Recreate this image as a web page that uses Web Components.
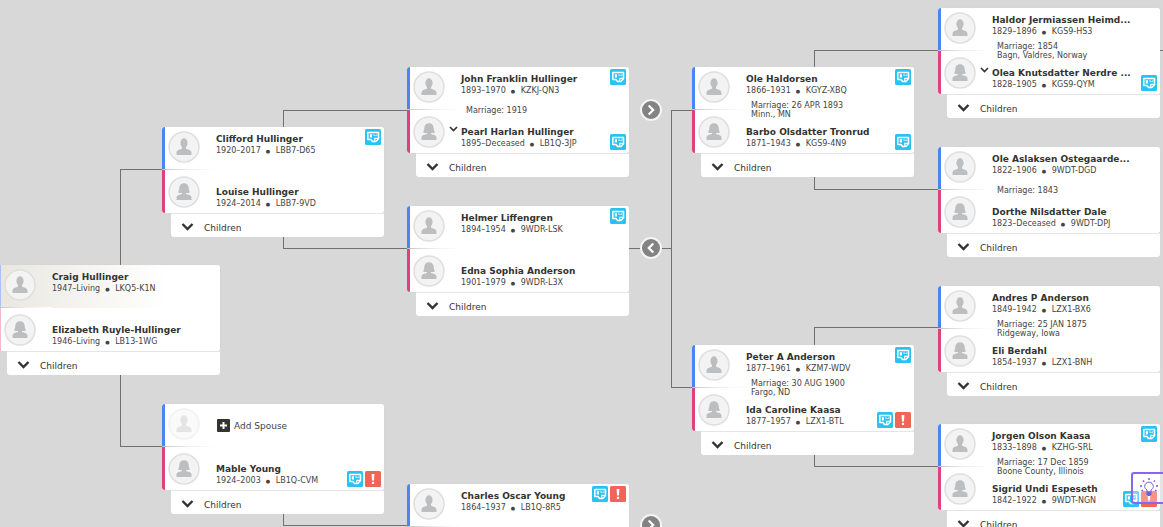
<!DOCTYPE html>
<html lang="en">
<head>
<meta charset="utf-8">
<title>Family tree</title>
<style>
  html, body { margin: 0; height: 100%; }
  body { background: #d8d8d8; font-family: "DejaVu Sans", Verdana, sans-serif; color: #333331; overflow: hidden; }
</style>
</head>
<body>
<pedigree-canvas>
  <couple-card focus style="--x:-2px;--y:265px">
    <tree-person name="Craig Hullinger" life="1947–Living" pid="LKQ5-K1N"></tree-person>
    <tree-person slot="second" sex="f" name="Elizabeth Ruyle-Hullinger" life="1946–Living" pid="LB13-1WG"></tree-person>
  </couple-card>
  <couple-card style="--x:162px;--y:127px">
    <tree-person name="Clifford Hullinger" life="1920–2017" pid="LBB7-D65" hints="r"></tree-person>
    <tree-person slot="second" sex="f" name="Louise Hullinger" life="1924–2014" pid="LBB7-9VD"></tree-person>
  </couple-card>
  <couple-card style="--x:162px;--y:404px">
    <tree-person empty></tree-person>
    <tree-person slot="second" sex="f" name="Mable Young" life="1924–2003" pid="LB1Q-CVM" hints="rp"></tree-person>
  </couple-card>
  <couple-card marriage="Marriage: 1919" style="--x:407px;--y:67px">
    <tree-person name="John Franklin Hullinger" life="1893–1970" pid="KZKJ-QN3" hints="r"></tree-person>
    <tree-person slot="second" sex="f" more name="Pearl Harlan Hullinger" life="1895–Deceased" pid="LB1Q-3JP" hints="r"></tree-person>
  </couple-card>
  <couple-card style="--x:407px;--y:206px">
    <tree-person name="Helmer Liffengren" life="1894–1954" pid="9WDR-LSK" hints="r"></tree-person>
    <tree-person slot="second" sex="f" name="Edna Sophia Anderson" life="1901–1979" pid="9WDR-L3X"></tree-person>
  </couple-card>
  <couple-card collapsed style="--x:407px;--y:484px">
    <tree-person name="Charles Oscar Young" life="1864–1937" pid="LB1Q-8R5" hints="rp"></tree-person>
  </couple-card>
  <couple-card marriage="Marriage: 26 APR 1893|Minn., MN" style="--x:692px;--y:67px">
    <tree-person name="Ole Haldorsen" life="1866–1931" pid="KGYZ-XBQ" hints="r"></tree-person>
    <tree-person slot="second" sex="f" name="Barbo Olsdatter Tronrud" life="1871–1943" pid="KGS9-4N9" hints="r"></tree-person>
  </couple-card>
  <couple-card marriage="Marriage: 30 AUG 1900|Fargo, ND" style="--x:692px;--y:345px">
    <tree-person name="Peter A Anderson" life="1877–1961" pid="KZM7-WDV" hints="r"></tree-person>
    <tree-person slot="second" sex="f" name="Ida Caroline Kaasa" life="1877–1957" pid="LZX1-BTL" hints="rp"></tree-person>
  </couple-card>
  <couple-card marriage="Marriage: 1854|Bagn, Valdres, Norway" style="--x:938px;--y:8px">
    <tree-person name="Haldor Jermiassen Heimd..." life="1829–1896" pid="KGS9-HS3"></tree-person>
    <tree-person slot="second" sex="f" more name="Olea Knutsdatter Nerdre ..." life="1828–1905" pid="KGS9-QYM" hints="r"></tree-person>
  </couple-card>
  <couple-card marriage="Marriage: 1843" style="--x:938px;--y:147px">
    <tree-person name="Ole Aslaksen Ostegaarde..." life="1822–1906" pid="9WDT-DGD"></tree-person>
    <tree-person slot="second" sex="f" name="Dorthe Nilsdatter Dale" life="1823–Deceased" pid="9WDT-DPJ"></tree-person>
  </couple-card>
  <couple-card marriage="Marriage: 25 JAN 1875|Ridgeway, Iowa" style="--x:938px;--y:286px">
    <tree-person name="Andres P Anderson" life="1849–1942" pid="LZX1-BX6"></tree-person>
    <tree-person slot="second" sex="f" name="Eli Berdahl" life="1854–1937" pid="LZX1-BNH"></tree-person>
  </couple-card>
  <couple-card marriage="Marriage: 17 Dec 1859|Boone County, Illinois" style="--x:938px;--y:424px">
    <tree-person name="Jorgen Olson Kaasa" life="1833–1898" pid="KZHG-SRL" hints="r"></tree-person>
    <tree-person slot="second" sex="f" name="Sigrid Undi Espeseth" life="1842–1922" pid="9WDT-NGN" hints="rp"></tree-person>
  </couple-card>
  <page-arrow style="--x:640px;--y:99px"></page-arrow>
  <page-arrow back style="--x:640px;--y:237px"></page-arrow>
  <page-arrow style="--x:640px;--y:514px"></page-arrow>
  <tip-button></tip-button>
</pedigree-canvas>
<script>
const define = (tag, html, setup) => {
  const tpl = document.createElement('template');
  tpl.innerHTML = html;
  customElements.define(tag, class extends HTMLElement {
    constructor() {
      super();
      this.attachShadow({ mode: 'open' }).append(tpl.content.cloneNode(true));
    }
    connectedCallback() { if (setup) setup(this, this.shadowRoot); }
  });
};

define('pedigree-canvas', `
  <style>
    :host { display: block; position: relative; width: 100%; height: 100%; overflow: hidden; }
    svg { position: absolute; inset: 0; width: 100%; height: 100%; }
  </style>
  <svg aria-hidden="true" fill="none" stroke="#707070" shape-rendering="crispEdges">
    <path d="M162 169.500H120.500V446.500H162M407 110.500H283.500V248.500H407M283.500 500V525.500H407M692 110.500H671.500V387.500H692M629 248.500H671M938 50.500H814.500V189.500H938M938 327.500H814.500V466.500H938M1160 50.500H1400"/>
  </svg>
  <slot></slot>`);

/* A couple: two people, their marriage and the children toggle */
define('couple-card', `
  <style>
    :host { position: absolute; left: var(--x); top: var(--y); width: 222px; }
    .couple { position: relative; display: grid; grid-template-rows: 43px 43px; background: #fff; border-radius: 3px; overflow: hidden; box-shadow: 0 0 1px #ccc; }
    .rule { position: absolute; left: 0; top: 42px; width: 54px; height: 1px; background: linear-gradient(90deg, #c4c4c4, #eee 50%, #fff); }
    .marriage { position: absolute; left: 59px; top: 43px; transform: translateY(-50%); margin: 0; font-size: 8px; line-height: 9px; color: #444; white-space: pre-line; }
    .marriage:empty, :host([collapsed]) button { display: none; }
    :host([focus]) .couple { --top-bg: linear-gradient(90deg, #e9e7df, #f4f3ef 35%, #fff 75%); --m: #a5c4f5; --f: #f5b5cc; }
    button { display: flex; align-items: center; gap: 10px; box-sizing: border-box; width: 213px; height: 24px; margin: 0 0 0 9px; padding: 4px 0 0 10px; border: 0; border-top: 1px solid #e8e8e8; border-radius: 0 0 3px 3px; background: #fff; color: #333331; font: 9px/12px "DejaVu Sans", Verdana, sans-serif; text-align: left; }
    svg { width: 13px; height: 8px; margin-bottom: 2px; }
  </style>
  <div class="couple"><slot></slot><slot name="second"></slot><span class="rule"></span><p class="marriage"></p></div>
  <button type="button"><svg viewBox="0 0 13 8" fill="none" stroke="#333331" stroke-width="2.400" aria-hidden="true"><path d="M1.500 1L6.500 6L11.500 1"/></svg>Children</button>`,
  (el, root) => {
    root.querySelector('.marriage').textContent = (el.getAttribute('marriage') || '').replace('|', '\n');
  });

const HEAD_M = '<ellipse cx="16" cy="12" rx="3.600" ry="4.700"/><path d="M14 14h4v3.500c1 1 5.500 1.200 5.500 4.200V24h-15v-2.300c0-3 4.500-3.200 5.500-4.200z"/>';
const HEAD_F = '<path d="M16 7.300c2.800 0 4.500 1.900 4.700 4.400.1 2 .3 3.300 1.300 4.600-1 .7-2.300.9-4 .8v.8c1.800.7 5.500 1 5.500 3.800V24h-15v-2.300c0-2.800 3.700-3.100 5.500-3.800v-.8c-1.700.1-3-.1-4-.8 1-1.300 1.200-2.600 1.300-4.600.2-2.500 1.900-4.400 4.700-4.400z"/>';
const HINTS = {
  r: '<svg class="hint" viewBox="0 0 16 16" role="img" aria-label="Record hint"><rect width="16" height="16" rx="1.500" fill="#28c3f2"/><path d="M2.800 3.500h10.700v6.300l-2.700 2.700H7.500L6 10.500H2.800z" fill="none" stroke="#fff" stroke-width="1.500" stroke-linejoin="round"/><path d="M4.800 5.300h2.200v3.200H4.800zM8.500 5.300h1v1h2v-1h.8v1.500H8.500z" fill="#fff"/><path d="M9.800 12.500V9.300h4" fill="none" stroke="#fff" stroke-width="1.200"/></svg>',
  p: '<svg class="hint" viewBox="0 0 16 16" role="img" aria-label="Data problem"><rect width="16" height="16" rx="1.500" fill="#f26458"/><path d="M6.600 3h2.800L9 9.500H7zM6.900 10.700h2.200v2.200H6.900z" fill="#fff"/></svg>'
};

/* One person row */
define('tree-person', `
  <style>
    :host { display: flex; box-sizing: border-box; height: 43px; padding-left: 3px; align-items: flex-start; position: relative; border-left: 3px solid var(--m, #4a86f0); background: var(--top-bg, #fff); }
    :host([sex=f]) { border-color: var(--f, #e2407c); background: #fff; }
    .face { flex: none; width: 32px; height: 32px; margin-top: 4px; }
    :host([sex=f]) .face { margin-top: 6px; }
    :host([empty]) .face { opacity: .4; }
    .text { margin: 6px 0 0 16px; min-width: 0; white-space: nowrap; }
    :host([sex=f]) .text { margin-top: 16px; }
    h3 { margin: 0; font-size: 9px; line-height: 13px; font-weight: bold; }
    p { display: flex; align-items: center; margin: 0; font-size: 8px; line-height: 10px; color: #444; }
    i { box-sizing: border-box; font-style: normal; width: 15px; padding-left: 5px; font-size: 5px; }
    .hints { position: absolute; right: 3px; top: 2px; display: flex; gap: 2px; }
    :host([sex=f]) .hints { top: 24px; }
    .hint { width: 16px; height: 16px; }
    .more { position: absolute; left: 39px; top: 16px; width: 9px; height: 6px; }
    :host(:not([more])) .more { display: none; }
    button { display: flex; align-items: center; gap: 4px; margin: 15px 0 0 17px; padding: 0; border: 0; background: none; color: #444; font: 9px/12px "DejaVu Sans", Verdana, sans-serif; }
    button svg { width: 13px; height: 13px; }
  </style>
  <svg class="face" viewBox="0 0 32 32" aria-hidden="true"><circle cx="16" cy="16" r="15" fill="#f3f3f3" stroke="#dfdfdf" stroke-width="1.500"/><g fill="#bcbec0"></g></svg>
  <svg class="more" viewBox="0 0 9 6" fill="none" stroke="#333331" stroke-width="1.600" aria-hidden="true"><path d="M1 1l3.500 3.500L8 1"/></svg>
  <div class="body" style="display:contents"></div>
  <div class="hints"></div>`,
  (el, root) => {
    const a = n => el.getAttribute(n) || '';
    root.querySelector('.face g').innerHTML = a('sex') ? HEAD_F : HEAD_M;
    root.querySelector('.body').innerHTML = el.hasAttribute('empty')
      ? '<button type="button"><svg viewBox="0 0 13 13" aria-hidden="true"><rect width="13" height="13" rx="1" fill="#333331"/><path d="M6.500 3v7M3 6.500h7" stroke="#fff" stroke-width="2"/></svg>Add Spouse</button>'
      : `<div class="text"><h3>${a('name')}</h3><p><span>${a('life')}</span><i>●</i><span>${a('pid')}</span></p></div>`;
    root.querySelector('.hints').innerHTML = [...a('hints')].map(k => HINTS[k]).join('');
  });

/* Round button that pages a branch in or out */
define('page-arrow', `
  <style>
    :host { position: absolute; left: var(--x); top: var(--y); }
    button { display: grid; place-items: center; width: 22px; height: 22px; padding: 0; border: 2px solid #f4f4f4; border-radius: 50%; background: #838383; box-sizing: border-box; }
    svg { width: 8px; height: 12px; }
    :host([back]) svg { transform: rotate(180deg); }
  </style>
  <button type="button" aria-label="Show generations"><svg viewBox="0 0 8 12" fill="none" stroke="#fff" stroke-width="2.200" aria-hidden="true"><path d="M1.700 1.500L6.200 6L1.700 10.500"/></svg></button>`);

/* Floating tip button pinned to the window edge */
define('tip-button', `
  <style>
    :host { position: absolute; right: -1px; bottom: 23px; }
    button { display: grid; place-items: center; box-sizing: border-box; width: 33px; height: 32px; padding: 0; border: 2px solid #8568ee; border-right: 0; border-radius: 3px 0 0 3px; background: #ffffff50; }
    svg { width: 18px; height: 20px; }
  </style>
  <button type="button" aria-label="Tips"><svg viewBox="0 0 18 20" fill="none" stroke="#7757e6" aria-hidden="true"><path d="M7 14v-2c-1.500-1-2.300-2-2.300-3.600a4.300 4.300 0 018.600 0C13.300 10 12.500 11 11 12v2z"/><path d="M6.500 14h5v2.500L10 18H8l-1.500-1.500z" fill="#7757e6" stroke="none"/><path d="M9 0v2M3 2.500l1.200 1.200M15 2.500l-1.200 1.200M0 8h2M16 8h2M1.500 13l1.500-1M16.500 13L15 12" stroke-width="1.400"/></svg></button>`);
</script>
</body>
</html>
